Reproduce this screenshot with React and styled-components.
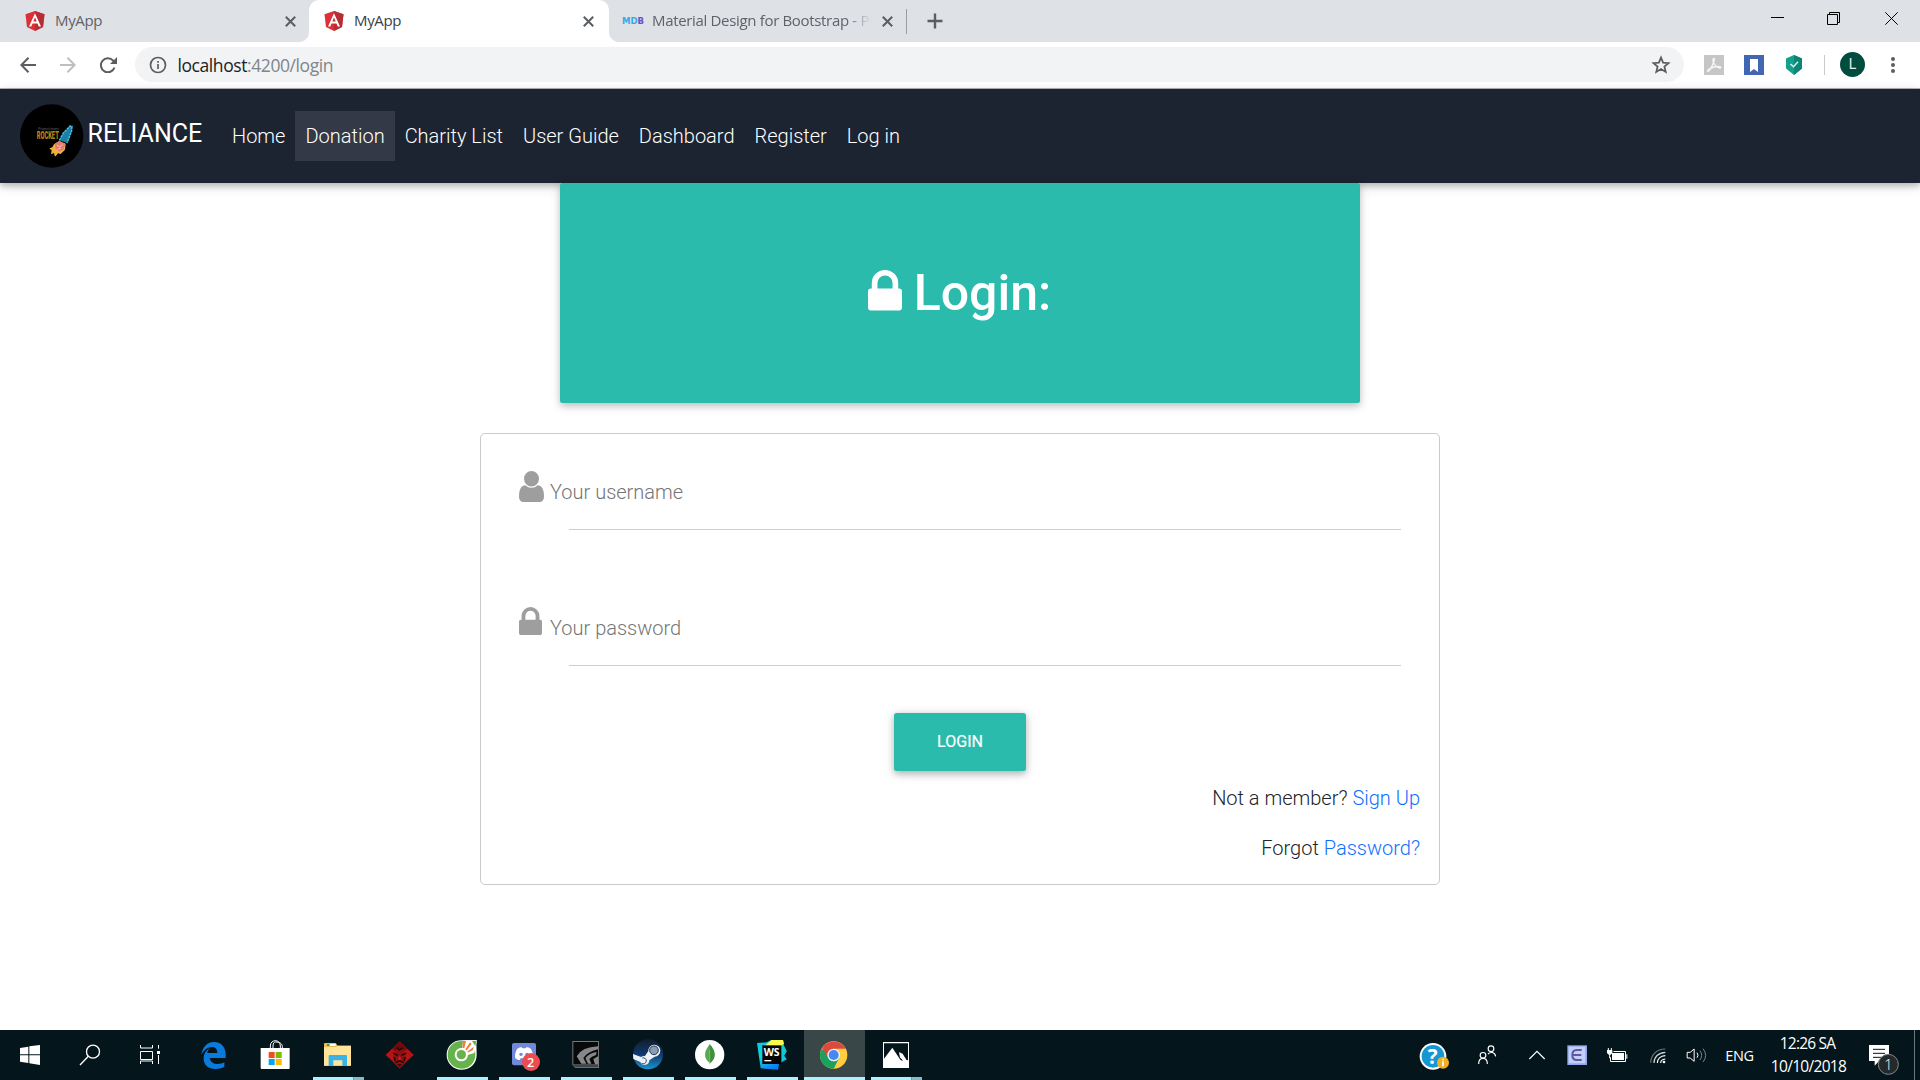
import React from "react";
import styled, { createGlobalStyle, css } from "styled-components";

const ui = `"Open Sans", "Noto Sans", sans-serif`;
const teal = "#2bbbad";

const GlobalStyle = createGlobalStyle`
  * { box-sizing: border-box; }
  body {
    margin: 0;
    background: #fff;
    font-family: Roboto, sans-serif;
    font-weight: 300;
    font-size: 20px;
    color: #212529;
    overflow: hidden;
  }
  svg { display: block; flex: none; }
`;

const Screen = styled.div`
  width: 1920px;
  height: 1080px;
  display: flex;
  flex-direction: column;
`;

/* ---------- browser chrome ---------- */

const TabStrip = styled.div`
  height: 42px;
  background: #dee1e6;
  display: flex;
  align-items: stretch;
  flex: none;
`;

const Tab = styled.div`
  position: relative;
  width: ${(p) => p.$width}px;
  height: 42px;
  padding: 0 ${(p) => p.$right}px 0 ${(p) => p.$left}px;
  display: flex;
  align-items: center;
  ${(p) =>
    p.$active &&
    css`
      background: #fff;
      border-radius: 10px 10px 0 0;
      &::before,
      &::after {
        content: "";
        position: absolute;
        bottom: 0;
        width: 10px;
        height: 10px;
      }
      &::before {
        left: -10px;
        background: radial-gradient(circle at 0 0, transparent 9.5px, #fff 10.5px);
      }
      &::after {
        right: -10px;
        background: radial-gradient(circle at 100% 0, transparent 9.5px, #fff 10.5px);
      }
    `}
`;

const TabTitle = styled.span`
  flex: 1;
  min-width: 0;
  margin-left: 10px;
  height: 24px;
  font: 400 15px/23px ${ui};
  letter-spacing: -0.33px;
  color: ${(p) => (p.$active ? "#3c4043" : "#5f6368")};
  white-space: nowrap;
  ${(p) =>
    p.$fade &&
    css`
      mask-image: linear-gradient(90deg, #000 calc(100% - 24px), transparent 100%);
    `}
`;

const MdbMark = styled.span`
  width: 20px;
  font: 700 8.5px/12px "DejaVu Sans", sans-serif;
  letter-spacing: 0;
  color: #33a9e8;
  white-space: nowrap;
  span { color: #6a4fc8; }
`;

const TabDivider = styled.i`
  width: 1px;
  height: 25px;
  margin: 9px 20px 0 0;
  background: #9a9da1;
`;

const NewTab = styled.div`
  width: 16px;
  padding-top: 13px;
`;

const WindowControls = styled.div`
  margin-left: auto;
  height: 37px;
  padding-right: 22px;
  display: flex;
  align-items: center;
  gap: 43px;
  svg:last-child { margin-left: 2px; }
`;

const Toolbar = styled.div`
  height: 47px;
  border-bottom: 1px solid #b6b4b6;
  background: #fff;
  display: flex;
  align-items: center;
  padding: 0 0 1px 20px;
  flex: none;
`;

const NavButtons = styled.div`
  width: 115px;
  flex: none;
  display: flex;
  gap: 20px;
`;

const Omnibox = styled.div`
  width: 1549px;
  height: 35px;
  flex: none;
  border-radius: 18px;
  background: #f1f3f4;
  display: flex;
  align-items: center;
  padding: 0 13px 0 14px;
`;

const Url = styled.span`
  margin-left: 10.5px;
  flex: 1;
  font: 400 17.5px/34px ${ui};
  letter-spacing: -0.42px;
  color: #80868b;
  b { font-weight: 400; color: #202124; }
`;

const Extensions = styled.div`
  display: flex;
  align-items: center;
  margin-left: 20px;
  gap: 20px;
`;

const ToolbarDivider = styled.i`
  width: 1px;
  height: 20px;
  background: #c8cacd;
`;

const Avatar = styled.div`
  width: 25px;
  height: 25px;
  margin-left: -5px;
  border-radius: 50%;
  background: #004d40;
  color: #e6efed;
  font: 400 14px/25px Roboto, sans-serif;
  text-align: center;
`;

/* ---------- page ---------- */

const Navbar = styled.nav`
  height: 94px;
  flex: none;
  background: #1c2331;
  display: flex;
  align-items: center;
  padding: 0 20px;
  box-shadow: 0 2.5px 6px rgba(0, 0, 0, 0.2), 0 2.5px 12px rgba(0, 0, 0, 0.14);
`;

const Brand = styled.div`
  width: 202px;
  display: flex;
  align-items: center;
  gap: 3.5px;
  color: #fff;
  font-weight: 400;
  font-size: 25px;
  span { padding-bottom: 5px; }
`;

const NavLink = styled.a`
  height: 50px;
  line-height: 50px;
  padding: 0 10px;
  color: #fff;
  white-space: nowrap;
  background: ${(p) => (p.$active ? "rgba(255,255,255,.1)" : "none")};
`;

const Page = styled.main`
  flex: 1;
  display: flex;
  flex-direction: column;
  align-items: center;
`;

const Jumbotron = styled.header`
  position: relative;
  width: 800px;
  height: 220px;
  margin-bottom: 30px;
  border-radius: 2.5px;
  background: ${teal};
  color: #fff;
  display: flex;
  justify-content: center;
  gap: 12px;
  padding: 87px 1px 0 0;
  box-shadow: 0 2.5px 6px rgba(0, 0, 0, 0.16), 0 2.5px 12px rgba(0, 0, 0, 0.12);
`;

const Title = styled.h1`
  margin: -7px 0 0;
  font-size: 50px;
  font-weight: 500;
  line-height: 60px;
`;

const Card = styled.form`
  width: 960px;
  height: 452px;
  border: 1px solid #c8cacb;
  border-radius: 5px;
  padding: 37px 38px 0;
  display: flex;
  flex-direction: column;
`;

const Field = styled.div`
  height: 59px;
  margin-bottom: ${(p) => p.$gap}px;
  display: flex;
  flex-direction: column;
`;

const FieldRow = styled.label`
  height: 58px;
  display: grid;
  grid-template-columns: 31px 1fr;
  color: #757575;
  line-height: 42px;
  svg { color: #9e9e9e; }
`;

const Underline = styled.div`
  height: 1px;
  margin-left: 50px;
  background: #ced0d4;
`;

const SubmitButton = styled.button`
  align-self: center;
  width: 132px;
  height: 58px;
  padding: 0;
  border: 0;
  border-radius: 2.5px;
  background: ${teal};
  color: #fff;
  font: 400 16px/58px Roboto, sans-serif;
  -webkit-text-stroke: 0.2px #fff;
  box-shadow: 0 2.5px 6px rgba(0, 0, 0, 0.2), 0 2.5px 12px rgba(0, 0, 0, 0.14);
`;

const Options = styled.div`
  margin: 12px -19px 0 0;
  display: flex;
  flex-direction: column;
  align-items: flex-end;
  gap: 20px;
  line-height: 30px;
`;

const Link = styled.a`
  color: #0f70ff;
`;

/* ---------- taskbar ---------- */

const Taskbar = styled.footer`
  height: 50px;
  flex: none;
  background: #04161b;
  display: flex;
  color: #fff;
`;

const StartGroup = styled.div`
  display: flex;
  margin-right: 3px;
`;

const AppTile = styled.div`
  width: 62px;
  height: 50px;
  position: relative;
  background: ${(p) =>
    p.$active ? "linear-gradient(90deg, transparent 1px, #3a4749 1px, #3a4749 100%)" : "none"};
`;

const Indicator = styled.div`
  position: absolute;
  left: ${(p) => (p.$full ? 1 : 6)}px;
  right: ${(p) => (p.$full ? 0 : 5)}px;
  bottom: 0;
  height: 3px;
  background: ${(p) =>
    p.$stacked ? "linear-gradient(90deg, #a8f2fd 40px, #5d8489 40px, #86bcc3 41px)" : "#a8f2fd"};
`;

const Tray = styled.div`
  margin-left: auto;
  display: flex;
`;

const Language = styled.div`
  width: 45px;
  text-align: center;
  font: 400 14.5px/51px ${ui};
  letter-spacing: -0.4px;
`;

const Clock = styled.div`
  width: 93px;
  padding-top: 2px;
  text-align: center;
  font: 400 15.5px/23px ${ui};
  letter-spacing: -0.7px;
  div:first-child { margin-right: 2px; letter-spacing: -0.8px; }
`;

const ShowDesktop = styled.div`
  width: 6px;
  border-left: 1px solid #6b777b;
`;

/* ---------- icons ---------- */

const Angular = () => (
  <svg width="20" height="20" viewBox="0 0 20 20">
    <path d="M10 0 19.5 3.3 18 16 10 20 2 16 .5 3.3z" fill="#dd3036" />
    <path d="M10 0 19.5 3.3 18 16 10 20z" fill="#b82d33" />
    <path d="M10 2.3 4 15.4h2.3l1.2-3h5l1.2 3H16zM10 6.6l1.7 4H8.3z" fill="#fff" />
  </svg>
);

const Close = () => (
  <svg width="11" height="11" viewBox="0 0 11 11" stroke="#5a5e62" strokeWidth="2" fill="none">
    <path d="M.8.8l9.4 9.4M10.2.8.8 10.2" />
  </svg>
);

const lockPath =
  "M320 768h512v-192q0-106-75-181t-181-75-181 75-75 181v192zM1152 864v576q0 40-28 68t-68 28h-960q-40 0-68-28t-28-68v-576q0-40 28-68t68-28h32v-192q0-184 132-316t316-132 316 132 132 316v192h32q40 0 68 28t28 68z";

const Lock = ({ w, h }) => (
  <svg width={w} height={h} viewBox="0 128 1152 1408" preserveAspectRatio="none" fill="currentColor">
    <path d={lockPath} />
  </svg>
);

const User = () => (
  <svg width="25" height="31" viewBox="256 128 1280 1536" preserveAspectRatio="none" fill="currentColor">
    <path d="M1536 1399q0 109-62.5 187t-150.5 78h-854q-88 0-150.5-78t-62.5-187q0-85 8.5-160.5t31.5-152 58.5-131 94-89 134.5-34.5q131 128 313 128t313-128q76 0 134.5 34.5t94 89 58.5 131 31.5 152 8.5 160.5zm-256-887q0 159-112.5 271.5t-271.5 112.5-271.5-112.5-112.5-271.5 112.5-271.5 271.5-112.5 271.5 112.5 112.5 271.5z" />
  </svg>
);

const Rocket = () => (
  <svg width="64" height="64" viewBox="30 27 192 192">
    <circle cx="125" cy="123" r="95" fill="#000" />
    <text x="84" y="106" fontSize="12" textLength="62" fill="#55575a" fontFamily="Roboto">Project team</text>
    <text transform="translate(80 133) scale(.62 1)" x="0" y="0" fontSize="31" fontWeight="900" textLength="107" lengthAdjust="spacingAndGlyphs" fill="#b98413" fontFamily="Roboto">ROCKET</text>
    <path d="M148 136l12-22 20-21 6 1-1 14-14 36z" fill="#1d7fa5" />
    <path d="M148 136l12-22 20-21 6 1-1 14-14 36" fill="none" stroke="#45c7ea" strokeWidth="4" strokeDasharray="8 2" />
    <path d="M132 148l16-10 19 8-2 18-13 13-8-2-7 9-3-1-2-9-9 4 2-12-7-6 9-3z" fill="#eeb13d" />
    <path d="M134 146l14-8 17 9-3 15-13 8-12-8z" fill="#e77b72" />
    <path d="M141 150l8 6 8-8M142 163l11-4" stroke="#f8c8a0" strokeWidth="3" fill="none" />
  </svg>
);

// Taskbar artwork is drawn on a grid of three units per pixel, offset per tile.
const Tile = ({ x, w = 62, children }) => (
  <svg width={w} height="50" viewBox={`${x} 15 ${w * 3} 150`} fill="none">
    {children}
  </svg>
);

const apps = [
  {
    name: "edge", x: 550,
    art: <path d="M605 89C609 64 624 51 643 51c24 0 36 18 35 41v7h-48c2 12 12 18 24 18 8 0 14-2 20-5v14c-8 4-16 6-26 6-24 0-37-14-36-34 1-14 9-23 19-29-5 5-8 10-8 15h30c0-12-6-18-16-18-13 0-24 9-32 23z" fill="#0a7bdc" />,
  },
  {
    name: "store", x: 736,
    art: (
      <>
        <path d="M812 69v-6c0-10 7-16 15-16s15 6 15 16v6M820 69v-6c0-9 4-12 8-12 12 0 20 5 20 14v5" stroke="#fff" strokeWidth="3" />
        <path d="M783 69h87v60q0 3-3 3h-81q-3 0-3-3z" fill="#fff" />
        <path d="M807 81h18v18h-18z" fill="#f04e1f" />
        <path d="M828 81h18v18h-18z" fill="#7fba00" />
        <path d="M807 102h18v18h-18z" fill="#00a4ef" />
        <path d="M828 102h18v18h-18z" fill="#ffb900" />
      </>
    ),
  },
  {
    name: "explorer", x: 922, open: true, stacked: true,
    art: (
      <>
        <path d="M973 57q0-3 3-3h32l6 8h40v60h-81z" fill="#eebb4a" />
        <path d="M982 57h26v6h-26z" fill="#fff" />
        <path d="M982 57h8v6h-8z" fill="#2fa84f" />
        <path d="M973 66h36l5-4h40v60h-81z" fill="#ffe49a" />
        <path d="M987 123V93q0-3 3-3h49q3 0 3 3v30h-14v-17h-27v17z" fill="#37b3e8" />
      </>
    ),
  },
  {
    name: "garena", x: 1108,
    art: (
      <>
        <path d="M1200 49l42 41-42 41-42-41z" fill="#8f1010" />
        <path d="M1158 90l18-17 12 8-6 10 6 22zM1242 90l-18-17-12 8 6 10-6 22z" fill="#b51414" />
        <path d="M1180 71l20-20 20 20-10 5-10-6-10 6z" fill="#6d0b0b" />
        <path d="M1180 84l14 7M1220 84l-14 7M1188 113l12-6 12 6M1183 96l4 12M1217 96l-4 12M1192 68l8 7 8-7" stroke="#150506" strokeWidth="4" />
        <path d="M1195 104l5-12 5 12z" fill="#d81d1d" />
        <path d="M1193 117h14l-7 8z" fill="#3a0808" />
      </>
    ),
  },
  {
    name: "coccoc", x: 4, open: true,
    art: (
      <>
        <path d="M140 46h-39c-29-3-50 17-50 43a44 44 0 0 0 44 45c26 0 46-18 46-45z" fill="#fff" />
        <path d="M96 48c-25 0-42 18-42 41a41 41 0 0 0 41 42c24 0 42-18 42-42 0-7-1-12-3-17l5-25z" fill="#66b34e" />
        <path d="M96 80l4-34h42l-8 38-20 6z" fill="#fff" />
        <path d="M98 68l2-21 9 1-5 22zM106 74l15-22 5 5-16 20zM112 81l20-16-2 10-16 8z" fill="#f47b38" />
        <path d="M127 48h13l-3 16z" fill="#66b34e" />
        <circle cx="95" cy="89" r="20" fill="#fff" />
        <circle cx="95" cy="89" r="14" fill="#66b34e" />
      </>
    ),
  },
  {
    name: "discord", x: 189, open: true,
    art: (
      <>
        <rect x="246" y="54" width="72" height="67" rx="6" fill="#7289da" />
        <path d="M255 98c0-14 3-22 7-27 5-3 9-4 13-4l2 3h10l2-3c5 0 9 1 13 4 5 6 8 16 7 28-5 5-10 6-14 6l-3-5h-20l-3 5c-4 0-10-2-14-7z" fill="#fff" />
        <circle cx="273" cy="88" r="5" fill="#7289da" />
        <circle cx="291" cy="88" r="5" fill="#7289da" />
        <circle cx="303" cy="111" r="27" fill="#ed4c50" />
        <text x="302" y="125" fontSize="38" fontWeight="600" textAnchor="middle" fill="#fff" fontFamily="Open Sans">2</text>
      </>
    ),
  },
  {
    name: "nvidia", x: 375, open: true,
    art: (
      <>
        <path d="M427 48h80v81h-71l-9-9z" fill="#75777a" />
        <path d="M430 51h74v67h-74z" fill="#080a0a" />
        <path d="M429 121h75M434 125h70" stroke="#1a1c1c" strokeWidth="2" />
        <path d="M440 94Q456 66 504 64v9q-32 8-44 26l9 17h-15z" fill="#85878a" />
        <path d="M466 99q12-15 34-18l-2 9q-14 4-20 12l6 14h-10zM490 102l14-8v24h-9z" fill="#85878a" />
      </>
    ),
  },
  {
    name: "steam", x: 561, open: true,
    art: (
      <>
        <defs>
          <linearGradient id="steam" x1="0" y1="0" x2="0" y2="1">
            <stop offset="0" stopColor="#111d2e" />
            <stop offset=".5" stopColor="#10396e" />
            <stop offset="1" stopColor="#1b93cf" />
          </linearGradient>
        </defs>
        <circle cx="654" cy="88" r="45" fill="url(#steam)" />
        <path d="M609 87l24 9q6-4 12-3l10-15a18 18 0 1 1 19 17l-16 11a14 14 0 0 1-27 5l-21-9z" fill="#eef1f4" />
        <circle cx="672" cy="76" r="13" fill="#8e9baa" stroke="#1d3c68" strokeWidth="3" />
        <path d="M637 99a9 9 0 1 1-2 16" stroke="#1a4f87" strokeWidth="3" />
      </>
    ),
  },
  {
    name: "mongodb", x: 747, open: true,
    art: (
      <>
        <circle cx="839" cy="89" r="44" fill="#fff" />
        <path d="M839 58c8 9 15 19 15 31 0 11-6 19-14 25-9-6-15-14-15-25 0-12 7-21 14-31z" fill="#58aa50" />
        <path d="M839 58c8 9 15 19 15 31 0 11-6 19-14 25z" fill="#3f8f3f" />
        <path d="M839 75v43" stroke="#a5b59d" strokeWidth="2" />
      </>
    ),
  },
  {
    name: "webstorm", x: 933, open: true,
    art: (
      <>
        <defs>
          <linearGradient id="ws" x1="0" y1="0" x2=".5" y2="1">
            <stop offset="0" stopColor="#07c3f2" />
            <stop offset=".5" stopColor="#14d6d5" />
            <stop offset="1" stopColor="#087cfa" />
          </linearGradient>
        </defs>
        <path d="M981 54l29-2 14-7h35l3 19 8 15-8 13 8 11-23 14-3 17-52-4z" fill="url(#ws)" />
        <path d="M1024 45h35l3 11-10 7h-48z" fill="#fcf84a" />
        <path d="M1062 62l8 17-8 13 8 11-16 8V62z" fill="#10c8d0" />
        <path d="M997 61h57v56h-57z" fill="#050505" />
        <text x="1001" y="93" fontSize="34" fontWeight="700" textLength="48" lengthAdjust="spacingAndGlyphs" fill="#fff" fontFamily="Open Sans">WS</text>
        <path d="M1003 105h21v4h-21z" fill="#fff" />
      </>
    ),
  },
  {
    name: "chrome", x: 1119, open: true, active: true,
    art: (
      <>
        <circle cx="1211" cy="90" r="41" fill="#ffcd40" />
        <path d="M1174 72A41 41 0 0 0 1211 131L1227 100 1211 90z" fill="#19a15f" />
        <path d="M1211 71h36a41 41 0 0 0-71-2l18 29 17-8z" fill="#dc4a3e" />
        <circle cx="1211" cy="90" r="19" fill="#f4f4f4" />
        <circle cx="1211" cy="90" r="15" fill="#4587f3" />
      </>
    ),
  },
  {
    name: "photos", x: 1305, open: true, stacked: true,
    art: (
      <>
        <path d="M1359 51h78v78h-78z" fill="#fff" />
        <path d="M1362 55h72v51l-5-1-12-20-7 8 9 16-8-5-24-36-25 33z" fill="#04161b" />
        <path d="M1407 82l7 2 15 20-5 3-14-9z" fill="#fff" />
      </>
    ),
  },
];

export default function App() {
  return (
    <Screen>
      <GlobalStyle />

      <TabStrip>
        <Tab $width={309} $left={25} $right={13}>
          <Angular />
          <TabTitle>MyApp</TabTitle>
          <Close />
        </Tab>
        <Tab $width={300} $left={15} $right={15} $active>
          <Angular />
          <TabTitle $active>MyApp</TabTitle>
          <Close />
        </Tab>
        <Tab $width={297} $left={13} $right={13}>
          <MdbMark>MD<span>B</span></MdbMark>
          <TabTitle $fade>Material Design for Bootstrap - Po</TabTitle>
          <svg width="11" height="1" />
          <Close />
        </Tab>
        <TabDivider />
        <NewTab>
          <svg width="16" height="16" viewBox="0 0 16 16" stroke="#5a5e62" strokeWidth="2.400">
            <path d="M8 .5v15M.5 8h15" />
          </svg>
        </NewTab>
        <WindowControls>
          <svg width="13" height="13" stroke="#000"><path d="M0 5.500h13" /></svg>
          <svg width="13" height="13" stroke="#000" fill="none">
            <path d="M.5 2.500h10v10h-10zM2.500 2.500v-2h10v10h-2" />
          </svg>
          <svg width="13" height="13" stroke="#000"><path d="M.3.3l12.400 12.400M12.700.3.3 12.700" /></svg>
        </WindowControls>
      </TabStrip>

      <Toolbar>
        <NavButtons>
          <svg width="16" height="16" fill="none" stroke="#5a5e62" strokeWidth="2"><path d="M16 8H1.500M8.500.8 1.400 8l7.100 7.200" /></svg>
          <svg width="24" height="16" viewBox="-4 0 24 16" fill="none" stroke="#bdbfc1" strokeWidth="2"><path d="M0 8h14.500M7.500.8 14.600 8l-7.100 7.200" /></svg>
          <svg width="18" height="16" viewBox="1 0 18 16" fill="none" stroke="#5a5e62" strokeWidth="2">
            <path d="M15.500 10.500a7 7 0 1 1-1.300-6.800l2 2" />
            <path d="M18 0v7h-7z" fill="#5a5e62" stroke="none" />
          </svg>
        </NavButtons>
        <Omnibox>
          <svg width="18" height="18" viewBox="0 0 18 18" fill="none" stroke="#5a5e62" strokeWidth="1.700">
            <circle cx="9" cy="9" r="7.500" />
            <path d="M9 8v5M9 5v1.700" />
          </svg>
          <Url><b>localhost</b>:4200/login</Url>
          <svg width="20" height="20" viewBox="0 0 20 20" fill="none" stroke="#5a5e62" strokeWidth="1.800">
            <path d="M10 2.600l2.100 5 5.400.5-4.100 3.500 1.300 5.300L10 14.100l-4.700 2.800 1.300-5.300L2.500 8.100l5.400-.5z" />
          </svg>
        </Omnibox>
        <Extensions>
          <svg width="20" height="20" viewBox="0 0 20 20">
            <path d="M0 0h20v20H0z" fill="#c6c6c6" />
            <path d="M9.800 3.500c-1.400 0-1 3 .4 5.500S13 12.500 15.500 13c2 .3 1.500-1.600-1-1.500-4 .2-8 1.500-10.500 3.500-1.400 1.400.4 2 1.800-.2C8 11.500 9.500 8 10.300 5.500c.3-1.200 0-2-.5-2z" stroke="#f7f7f7" strokeWidth="1.300" fill="none" />
          </svg>
          <svg width="20" height="20"><path d="M0 0h20v20H0z" fill="#4267b2" /><path d="M6 4h8v13l-4-3-4 3z" fill="#fff" /></svg>
          <svg width="20" height="20" viewBox="0 0 20 20">
            <path d="M10 0l8 3.500v10L10 20l-8-6.500v-10z" fill="#12a18a" />
            <path d="M10 0l8 3.500v10L10 20z" fill="#0d8576" />
            <path d="M6.500 9l3 2.700 4.500-5" stroke="#d6f1ec" strokeWidth="1.500" fill="none" />
          </svg>
          <ToolbarDivider />
          <Avatar>L</Avatar>
          <svg width="24" height="18" viewBox="-2 0 24 18" fill="#5a5e62">
            <circle cx="6" cy="3" r="2" /><circle cx="6" cy="9" r="2" /><circle cx="6" cy="15" r="2" />
          </svg>
        </Extensions>
      </Toolbar>

      <Navbar>
        <Brand>
          <Rocket />
          <span>RELIANCE</span>
        </Brand>
        <NavLink>Home</NavLink>
        <NavLink $active>Donation</NavLink>
        <NavLink>Charity List</NavLink>
        <NavLink>User Guide</NavLink>
        <NavLink>Dashboard</NavLink>
        <NavLink>Register</NavLink>
        <NavLink>Log in</NavLink>
      </Navbar>

      <Page>
        <Jumbotron>
          <Lock w={34} h={40.500} />
          <Title>Login:</Title>
        </Jumbotron>
        <Card>
          <Field $gap={77}>
            <FieldRow><User />Your username</FieldRow>
            <Underline />
          </Field>
          <Field $gap={47}>
            <FieldRow><Lock w={23} h={28} />Your password</FieldRow>
            <Underline />
          </Field>
          <SubmitButton type="button">LOGIN</SubmitButton>
          <Options>
            <div>Not a member? <Link>Sign Up</Link></div>
            <div>Forgot <Link>Password?</Link></div>
          </Options>
        </Card>
      </Page>

      <Taskbar>
        <StartGroup>
          <Tile x={0} w={60}>
            <path d="M60 69l25-4v23H60zM88 64l32-4v28H88zM60 91h25v23l-25-4zM88 91h32v29l-32-5z" fill="#fff" />
          </Tile>
          <Tile x={180} w={60}>
            <circle cx="279" cy="80" r="19.500" stroke="#fff" strokeWidth="4" />
            <path d="M265 94l-25 26" stroke="#fff" strokeWidth="4" />
          </Tile>
          <Tile x={360} w={60}>
            <path d="M421.500 60v9h36v-9M421.500 79.500h36v24h-36zM421.500 117v-9h36v9M475.500 60v11M475.500 90v27" stroke="#fff" strokeWidth="3" />
            <path d="M471 78h9v9h-9z" fill="#fff" />
          </Tile>
        </StartGroup>
        {apps.map((a) => (
          <AppTile key={a.name} $active={a.active}>
            <Tile x={a.x}>{a.art}</Tile>
            {a.open && <Indicator $full={a.active} $stacked={a.stacked} />}
          </AppTile>
        ))}
        <Tray>
          <Tile x={21} w={53}>
            <circle cx="99" cy="94" r="40" fill="#fff" />
            <circle cx="99" cy="94" r="34" fill="#1796d4" />
            <text x="98" y="116" fontSize="62" fontWeight="700" textAnchor="middle" fill="#fff" fontFamily="Open Sans">?</text>
            <circle cx="129" cy="113" r="18" fill="#f3ae26" />
            <path d="M129 101v5M129 109v15" stroke="#fff" strokeWidth="5" />
          </Tile>
          <Tile x={180} w={54}>
            <g stroke="#fff" strokeWidth="3.500">
              <circle cx="249" cy="91" r="8.500" />
              <path d="M236 117c0-11 5-17 13-17s13 6 13 17" />
              <circle cx="273" cy="71" r="8.500" />
              <path d="M264 87c6-6 20-8 23 7" />
            </g>
          </Tile>
          <Tile x={342} w={43}><path d="M388 102l23-23 23 23" stroke="#fff" strokeWidth="3.500" /></Tile>
          <Tile x={471} w={40}>
            <path d="M502 61h59v59h-59z" fill="#8fa6ee" />
            <path d="M506 65h50v50h-50z" fill="#c3cffa" />
            <path d="M545 75h-15q-13 0-13 15t13 15h15M519 90h25" stroke="#5d5b9c" strokeWidth="6" />
          </Tile>
          <Tile x={591} w={40}>
            <path d="M640.500 79.500h36v30h-45v-12" stroke="#fff" strokeWidth="3" />
            <path d="M636 84h36v21h-36z" fill="#fff" />
            <path d="M679 88h3v13h-3zM621 75h16v9l-5 5h-6l-5-5z" fill="#fff" />
            <path d="M625 69v6M634 69v6M629 87v12h4" stroke="#fff" strokeWidth="3" />
          </Tile>
          <Tile x={711} w={40}>
            <g strokeWidth="3.500">
              <path d="M752 113c1-24 18-41 44-41" stroke="#69767a" />
              <path d="M762 114c0-18 13-31 34-32" stroke="#d0d6d8" />
              <path d="M772 114c0-12 9-21 24-22" stroke="#fff" />
              <path d="M782 114c0-7 5-11 14-12" stroke="#fff" />
            </g>
            <circle cx="792" cy="111" r="4" fill="#fff" />
          </Tile>
          <Tile x={831} w={40}>
            <path d="M861.500 82h9l12-10v37l-12-10h-9z" stroke="#fff" strokeWidth="3" />
            <path d="M891 83q6 8 0 15" stroke="#fff" strokeWidth="3" />
            <path d="M900 77q10 14 0 28M909 71q16 20 0 40" stroke="#77848a" strokeWidth="3" />
          </Tile>
          <Language>ENG</Language>
          <Clock>
            <div>12:26 SA</div>
            <div>10/10/2018</div>
          </Clock>
          <Tile x={1365} w={59}>
            <path d="M1407 60h60v48h-30l-13 14v-14h-17z" fill="#fff" />
            <path d="M1419 73h36M1419 85h36M1419 97h26" stroke="#04161b" strokeWidth="3" />
            <circle cx="1465" cy="118" r="30" fill="#24292c" stroke="#85898b" strokeWidth="3" />
            <text x="1465" y="135" fontSize="44" textAnchor="middle" fill="#fff" fontFamily="Open Sans">1</text>
          </Tile>
          <ShowDesktop />
        </Tray>
      </Taskbar>
    </Screen>
  );
}
